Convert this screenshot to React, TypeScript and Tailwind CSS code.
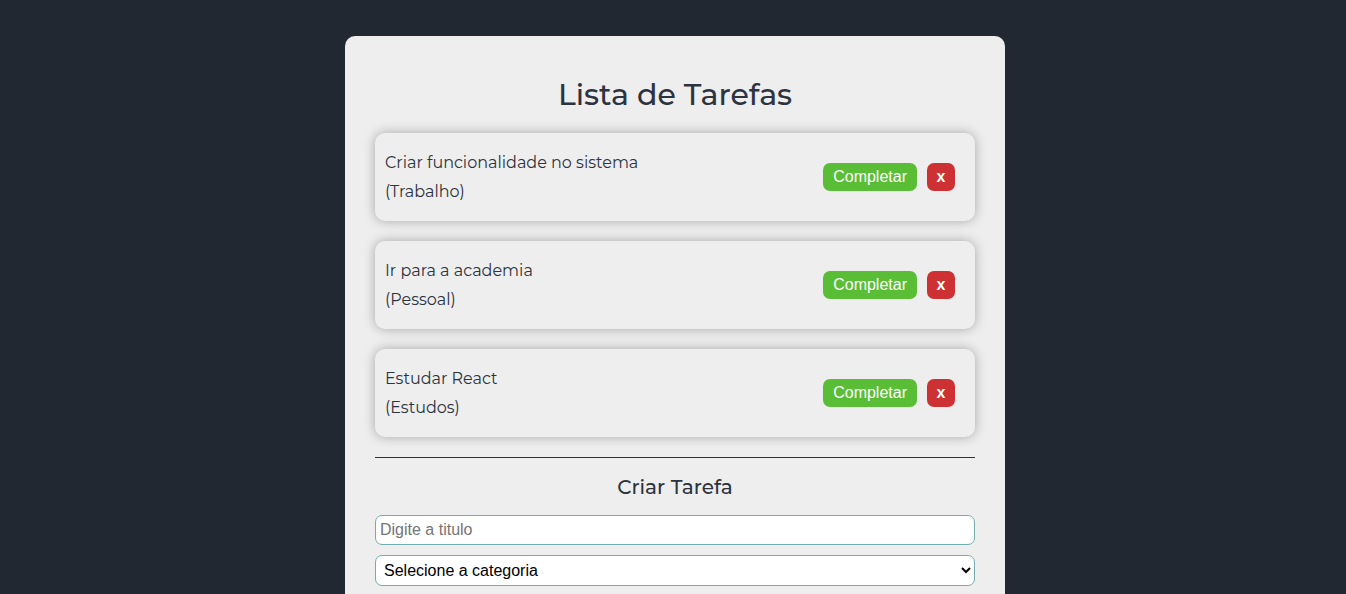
const tasks = [
  { id: 1, text: "Criar funcionalidade no sistema", category: "Trabalho" },
  { id: 2, text: "Ir para a academia", category: "Pessoal" },
  { id: 3, text: "Estudar React", category: "Estudos" },
];

export default function App() {
  return (
    <div className="flex h-screen items-start justify-center overflow-hidden bg-[#222831] pt-9 pr-4 pl-5 font-['Montserrat','Inter',sans-serif] text-[#2d333f]">
      <main className="w-full max-w-[660px] rounded-[10px] bg-[#eeeeee] px-[30px] pt-9 pb-8">
        <h1 className="mb-[15px] text-center text-[30px] leading-[46px] font-medium">Lista de Tarefas</h1>
        <ul className="flex flex-col gap-5 border-b border-[#2d333f] pb-5">
          {tasks.map((task) => (
            <li key={task.id} className="flex items-center justify-between rounded-[10px] bg-[#eeeeee] py-[15px] pr-5 pl-[10px] shadow-[0_0_12px_rgba(0,0,0,0.3)]">
              <div className="text-[16px] leading-[29px] font-normal">
                <p>{task.text}</p>
                <p>({task.category})</p>
              </div>
              <div className="flex gap-[10px] font-['Liberation_Sans',sans-serif] text-[16px] leading-[18px] text-white">
                <button type="button" className="rounded-[7px] bg-[#5abd36] px-[10px] py-[5px]">Completar</button>
                <button type="button" className="w-7 rounded-[7px] bg-[#cd3133] py-[5px] font-bold">x</button>
              </div>
            </li>
          ))}
        </ul>
        <form className="flex flex-col gap-[10px] pt-[14px]">
          <h2 className="mb-[3px] text-center text-[20px] leading-[30px] font-medium">Criar Tarefa</h2>
          <input aria-label="Título" placeholder="Digite a titulo" className="h-[30px] rounded-[7px] border border-[#72adad] bg-white px-1 font-['Liberation_Sans',sans-serif] text-[16px] text-black placeholder:text-[#757575]" />
          <select aria-label="Categoria" className="h-[31px] rounded-[7px] border border-[#72adad] bg-white px-1 font-['Liberation_Sans',sans-serif] text-[16px] text-black">
            <option>Selecione a categoria</option>
            <option>Trabalho</option>
            <option>Pessoal</option>
            <option>Estudos</option>
          </select>
        </form>
      </main>
    </div>
  );
}
